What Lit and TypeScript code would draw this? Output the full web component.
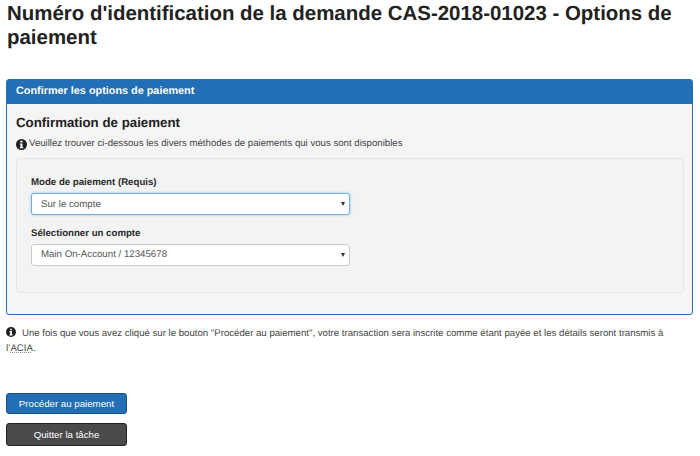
import { LitElement, html, css, svg } from "lit";
import { customElement } from "lit/decorators.js";

const info = (size: number) => html`<svg class="info" width=${size} height=${size} viewBox="0 0 16 16" aria-hidden="true">
  <circle cx="8" cy="8" r="8" fill="#1f1f1f"></circle>
  ${svg`<rect x="6.6" y="2.6" width="2.8" height="2.6" rx=".5" fill="#fff"></rect>
  <path d="M5.6 6.5h3.8v5.2h1.1v1.8H5.6v-1.8h1V8.3h-1z" fill="#fff"></path>`}
</svg>`;

@customElement("app-root")
export class AppRoot extends LitElement {
  static styles = css`
    :host {
      display: block;
      width: 700px;
      height: 456px;
      overflow: hidden;
      background: #fff;
      font-family: "Liberation Sans", Arial, sans-serif;
      color: #333;
      box-sizing: border-box;
      padding: 0 7px 0 6px;
      text-rendering: geometricPrecision;
    }
    * { box-sizing: border-box; }
    h1 {
      margin: 0;
      padding: 2px 0 0 1px;
      font-size: 20.45px;
      line-height: 24px;
      height: 79px;
      font-weight: 700;
      color: #222;
    }
    .panel {
      height: 236px;
      border: 1px solid #2a6fb0;
      border-radius: 3px;
      background: #f5f5f5;
      display: flex;
      flex-direction: column;
    }
    .panel-head {
      height: 24px;
      background: #226fb5;
      color: #fff;
      font-size: 10.85px;
      font-weight: 700;
      line-height: 23px;
      padding-left: 9px;
      flex: none;
    }
    .panel-body {
      padding: 11px 8px 0 9px;
      flex: 1;
    }
    h2 {
      margin: 0;
      font-size: 13.3px;
      line-height: 16px;
      font-weight: 700;
      color: #222;
    }
    .lead {
      display: flex;
      align-items: center;
      gap: 2px;
      margin-top: 6px;
      font-size: 9.64px;
      line-height: 14px;
      color: #444;
    }
    .well {
      margin-top: 7px;
      height: 135px;
      background: #f3f3f3;
      border: 1px solid #e6e6e6;
      border-radius: 4px;
      padding: 17px 14px;
      display: flex;
      flex-direction: column;
    }
    label {
      font-size: 9.66px;
      font-weight: 700;
      line-height: 14px;
      color: #2a2a2a;
      display: block;
    }
    .select {
      margin-top: 3px;
      width: 319px;
      height: 22px;
      background: #fff;
      border: 1px solid #ccc;
      border-radius: 3px;
      font-size: 9.7px;
      line-height: 20px;
      color: #555;
      padding-left: 9px;
      position: relative;
    }
    .select.focus {
      border-color: #76aee0;
      line-height: 21px;
      box-shadow: 0 0 3px rgba(102, 175, 233, 0.7);
    }
    .select::after {
      content: "";
      position: absolute;
      right: 4px;
      top: 8px;
      border-left: 2.5px solid transparent;
      border-right: 2.5px solid transparent;
      border-top: 4px solid #333;
    }
    .field + .field { margin-top: 12px; }
    .note {
      margin: 11.4px 0 0;
      font-size: 9.64px;
      line-height: 15px;
      color: #444;
    }
    .note .info { vertical-align: -1px; margin-right: 6px; }
    abbr {
      margin: 0 0.4px;
      text-decoration: underline dotted #888;
    }
    .actions {
      margin-top: 36.6px;
      display: flex;
      flex-direction: column;
      align-items: flex-start;
      gap: 9px;
    }
    button {
      width: 121px;
      height: 21px;
      padding: 0;
      border-radius: 3px;
      font: 9.7px "Liberation Sans", Arial, sans-serif;
      color: #fff;
      border: 1px solid #174f82;
    }
    .primary { background: #226fb5; }
    .secondary { background: #4a4a4a; border-color: #222; height: 23px; }
  `;

  render() {
    return html`
      <h1>Numéro d'identification de la demande CAS-2018-01023 - Options de paiement</h1>
      <section class="panel">
        <div class="panel-head">Confirmer les options de paiement</div>
        <div class="panel-body">
          <h2>Confirmation de paiement</h2>
          <div class="lead">${info(11)}<span>Veuillez trouver ci-dessous les divers méthodes de paiements qui vous sont disponibles</span></div>
          <div class="well">
            <div class="field">
              <label>Mode de paiement (Requis)</label>
              <div class="select focus">Sur le compte</div>
            </div>
            <div class="field">
              <label>Sélectionner un compte</label>
              <div class="select">Main On-Account / 12345678</div>
            </div>
          </div>
        </div>
      </section>
      <p class="note">${info(10)}Une fois que vous avez cliqué sur le bouton "Procéder au paiement", votre transaction sera inscrite comme étant payée et les détails seront transmis à l'<abbr>ACIA</abbr>.</p>
      <div class="actions">
        <button class="primary">Procéder au paiement</button>
        <button class="secondary">Quitter la tâche</button>
      </div>
    `;
  }
}
